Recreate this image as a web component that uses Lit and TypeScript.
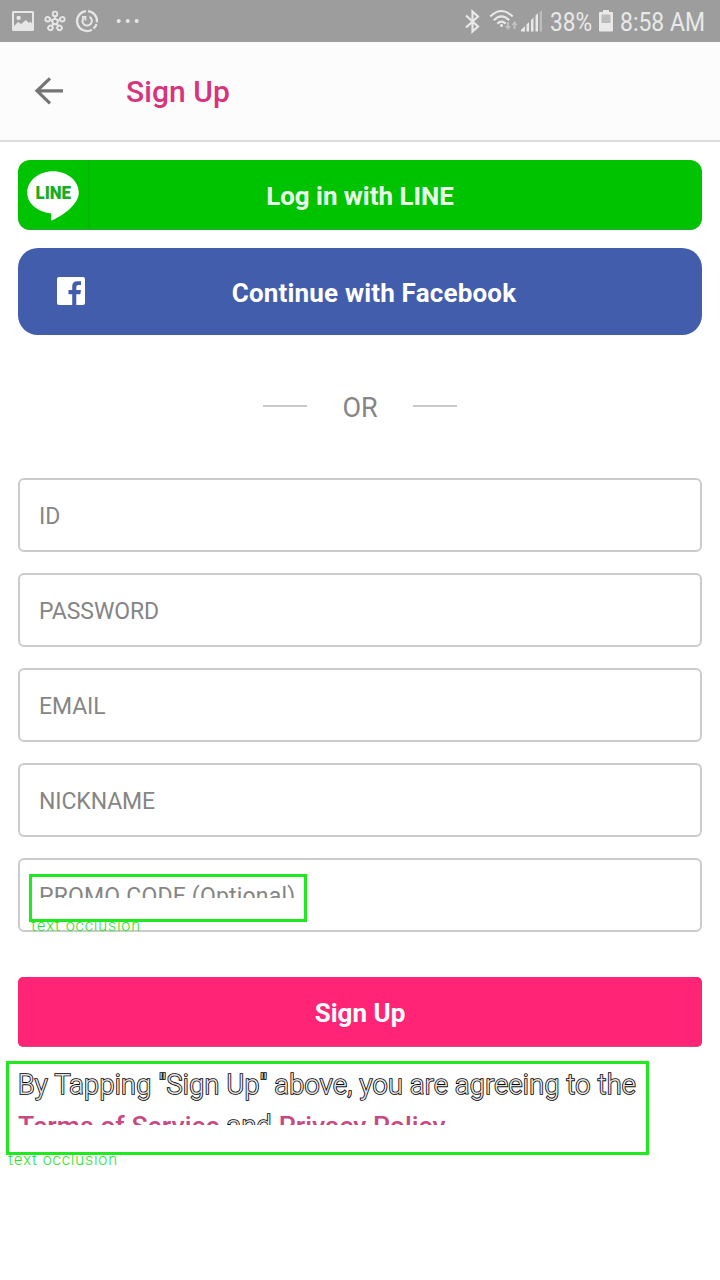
import { LitElement, html, css, svg } from "lit";
import { customElement } from "lit/decorators.js";

@customElement("status-bar")
class StatusBar extends LitElement {
  static styles = css`
    :host { display: block; height: 42px; background: #9d9d9d; }
    svg { display: block; }
    text { font-family: Roboto, sans-serif; fill: #e9e9e9; }
  `;
  render() {
    const spokes = [0, 72, 144, 216, 288].map((a) => svg`
      <g transform="rotate(${a} 55 21.6)">
        <path d="M55 18.8V16.3" /><circle cx="55" cy="13.9" r="2.3" />
      </g>`);
    return html`<svg width="720" height="42" viewBox="0 0 720 42">
      <path fill="#e6e6e6" fill-rule="evenodd" d="M13.5 11h19a1.5 1.5 0 0 1 1.500 1.500v17a1.500 1.500 0 0 1-1.500 1.500h-19a1.500 1.500 0 0 1-1.500-1.500v-17a1.500 1.500 0 0 1 1.500-1.500zM14 13v13l4-4 3 2 5-4 3 3 1.500-1.500 1.500 2V13zM18.700 15.700a2.200 2.200 0 1 1-.1 4.400a2.200 2.200 0 0 1 .1-4.400z" />
      <g fill="none" stroke="#e6e6e6" stroke-width="1.9">
        <circle cx="55" cy="21.600" r="2.700" />${spokes}
      </g>
      <g fill="none" stroke="#e6e6e6" stroke-width="2.300">
        <path d="M88 11.050A10 10 0 0 1 96.900 22.300M96.500 24.200A10 10 0 0 1 93.500 28.600M92 29.700A10 10 0 1 1 86 11.050" />
        <path d="M89.500 16.800A4.700 4.700 0 1 1 84 17.400" stroke-width="2" />
        <path d="M82 16.800H85.500V20.500" stroke-width="1.700" />
      </g>
      <g fill="#e6e6e6"><circle cx="118.700" cy="21" r="2" /><circle cx="127.700" cy="21" r="2" /><circle cx="136.700" cy="21" r="2" /></g>
      <path fill="none" stroke="#e9e9e9" stroke-width="2.200" d="M466 15.500L478 26.500L472.500 31.500V11.500L478 16.500L466 27.500" />
      <g fill="none" stroke="#e9e9e9" stroke-width="2.100">
        <path d="M490.300 16.500Q501.500 5.500 512.700 16.500M493.800 20.200Q501.500 12.500 509.200 20.200M497.300 23.700Q501.500 19.500 505.700 23.700" />
      </g>
      <circle cx="501.500" cy="25.600" r="1.500" fill="#e9e9e9" />
      <path fill="#c2c2c2" d="M507 22h2v4h2l-3 4-3-4h2zM513.500 29h2v-4h2l-3-4-3 4h2z" />
      <path fill="#e9e9e9" d="M521 31.500V30l4-4v5.500zM526.500 24.500l2.600-2.600V31.500h-2.600zM531 20l2.500-2.500V31.500H531zM535.500 15.500l2.500-2.500V31.500h-2.500z" />
      <path fill="#bdbdbd" d="M539.700 12l2.300-2V31.500h-2.300z" />
      <text x="550" y="31" font-size="26" textLength="42" lengthAdjust="spacingAndGlyphs">38%</text>
      <path fill="#e9e9e9" d="M603 10h6v2h3a1 1 0 0 1 1 1v17.500a1 1 0 0 1-1 1h-12a1 1 0 0 1-1-1V13a1 1 0 0 1 1-1h3z" />
      <path fill="#bcbcbc" d="M601.500 14.500h9V23h-9z" />
      <text x="620" y="31" font-size="26" textLength="85" lengthAdjust="spacingAndGlyphs">8:58 AM</text>
    </svg>`;
  }
}

@customElement("app-root")
class AppRoot extends LitElement {
  static styles = css`
    :host { display: block; position: relative; width: 720px; height: 1280px; overflow: hidden; background: #fff; font-family: Roboto, sans-serif; }
    * { box-sizing: border-box; }
    svg { display: block; }
    header { height: 100px; background: #fcfcfc; border-bottom: 2px solid #dcdcdc; display: flex; align-items: center; padding-left: 33px; }
    h1 { margin: 0 0 0 61px; font-size: 30px; font-weight: 500; color: #d8337d; letter-spacing: 0.05px; }
    main { padding: 18px 18px 0; display: flex; flex-direction: column; }
    .social { display: flex; align-items: center; color: #fff; font-weight: 700; white-space: nowrap; }
    .line { height: 70px; border-radius: 12px; background: #00c300; border-bottom: 1px solid #22ab2a; font-size: 25.9px; }
    .line .mark { width: 72px; height: 69px; border-right: 2px solid #08b30a; }
    .label { flex: 1; text-align: center; }
    .line .label { padding: 2px 72px 0 0; color: #e9ffe9; }
    .fb { height: 87px; margin-top: 18px; border-radius: 20px; background: #415dac; font-size: 26px; letter-spacing: 0.18px; }
    .fb svg { margin: -2px 0 0 39px; }
    .fb .label { padding: 3px 39px 0 0; }
    .or { height: 143px; display: flex; align-items: center; justify-content: center; gap: 35px; font-size: 27px; color: #858585; }
    .or i { width: 44px; height: 2px; background: #c9c9c9; margin-top: -2px; }
    .or span { padding-top: 2px; }
    .fields { display: flex; flex-direction: column; gap: 21px; }
    .field { height: 74px; border: 2px solid #cbcbcb; border-radius: 6px; padding: 23px 19px 0; font-size: 23px; line-height: 27px; letter-spacing: -0.1px; color: #858585; }
    .cut { overflow: hidden; height: 15px; white-space: nowrap; letter-spacing: 0.19px; }
    .submit { height: 70px; margin-top: 45px; border-radius: 5px; background: #ff2476; border-bottom: 1px solid #d84a82; display: flex; align-items: center; justify-content: center; padding-top: 3px; color: #fff; font-size: 26px; font-weight: 700; }
    .terms { height: 60px; margin-top: 18px; overflow: hidden; white-space: nowrap; font-size: 27px; line-height: 40.6px; font-weight: 300; letter-spacing: 0.31px; color: #e4e4e4; -webkit-text-stroke: 1.7px #000; paint-order: stroke fill; }
    .terms b { font-weight: 500; font-size: 26.6px; letter-spacing: 0.03px; color: #c74882; -webkit-text-stroke: 0; }
    .box { position: absolute; border: 3px solid #1eea1e; }
    .promo { left: 29px; top: 874px; width: 278px; height: 48px; }
    .legal { left: 6px; top: 1061px; width: 643px; height: 94px; }
    .note { position: absolute; }
    .note text { font: 300 16px Roboto, sans-serif; fill: #22e322; }
    .n1 { left: 30px; top: 919px; }
    .n2 { left: 7px; top: 1153px; }
  `;
  render() {
    return html`
      <status-bar></status-bar>
      <header>
        <svg width="32" height="32" viewBox="0 0 32 32"><path d="M30 16H4M17 3.500L4 16L17 28.500" transform="translate(0 -.2)" fill="none" stroke="#757575" stroke-width="3.200" /></svg>
        <h1>Sign Up</h1>
      </header>
      <main>
        <div class="social line">
          <div class="mark"><svg width="70" height="69" viewBox="0 0 70 69">
            <path fill="#fff" d="M35 11.200C49.500 11.200 60.800 21 60.800 32.500C60.800 44.500 45 55.500 34 60.500C32 61 34.500 54.500 32.500 53.300C19.500 52 9.200 43.500 9.200 32.500C9.200 21 20.500 11.200 35 11.200Z" />
            <text x="17.500" y="39.200" font-size="17.500" font-weight="900" fill="#18ad20" font-family="Roboto, sans-serif" textLength="35.500" lengthAdjust="spacingAndGlyphs">LINE</text>
          </svg></div>
          <div class="label">Log in with LINE</div>
        </div>
        <div class="social fb">
          <svg width="28" height="28" viewBox="0 0 28 28"><path fill="#fff" d="M2 0h24a2 2 0 0 1 2 2v24a2 2 0 0 1-2 2h-6.700V17.200h4L24 13h-4.700v-3q0-2.100 2.200-2.100H24V4.200h-3.500q-5.300 0-5.300 5.300V13H11.500v4.200h3.700V28H2a2 2 0 0 1-2-2V2a2 2 0 0 1 2-2z" /></svg>
          <div class="label">Continue with Facebook</div>
        </div>
        <div class="or"><i></i><span>OR</span><i></i></div>
        <div class="fields">
          ${["ID", "PASSWORD", "EMAIL", "NICKNAME"].map((t) => html`<div class="field">${t}</div>`)}
          <div class="field"><div class="cut">PROMO CODE (Optional)</div></div>
        </div>
        <div class="submit">Sign Up</div>
        <div class="terms">By Tapping "Sign Up" above, you are agreeing to the<br /><b>Terms of Service</b> and <b>Privacy Policy</b></div>
      </main>
      <div class="box promo"></div>
      <div class="box legal"></div>
      <svg class="note n1" width="115" height="13"><text x="1" y="12" textLength="109">text occlusion</text></svg>
      <svg class="note n2" width="115" height="13"><text x="1" y="12" textLength="109">text occlusion</text></svg>
    `;
  }
}
